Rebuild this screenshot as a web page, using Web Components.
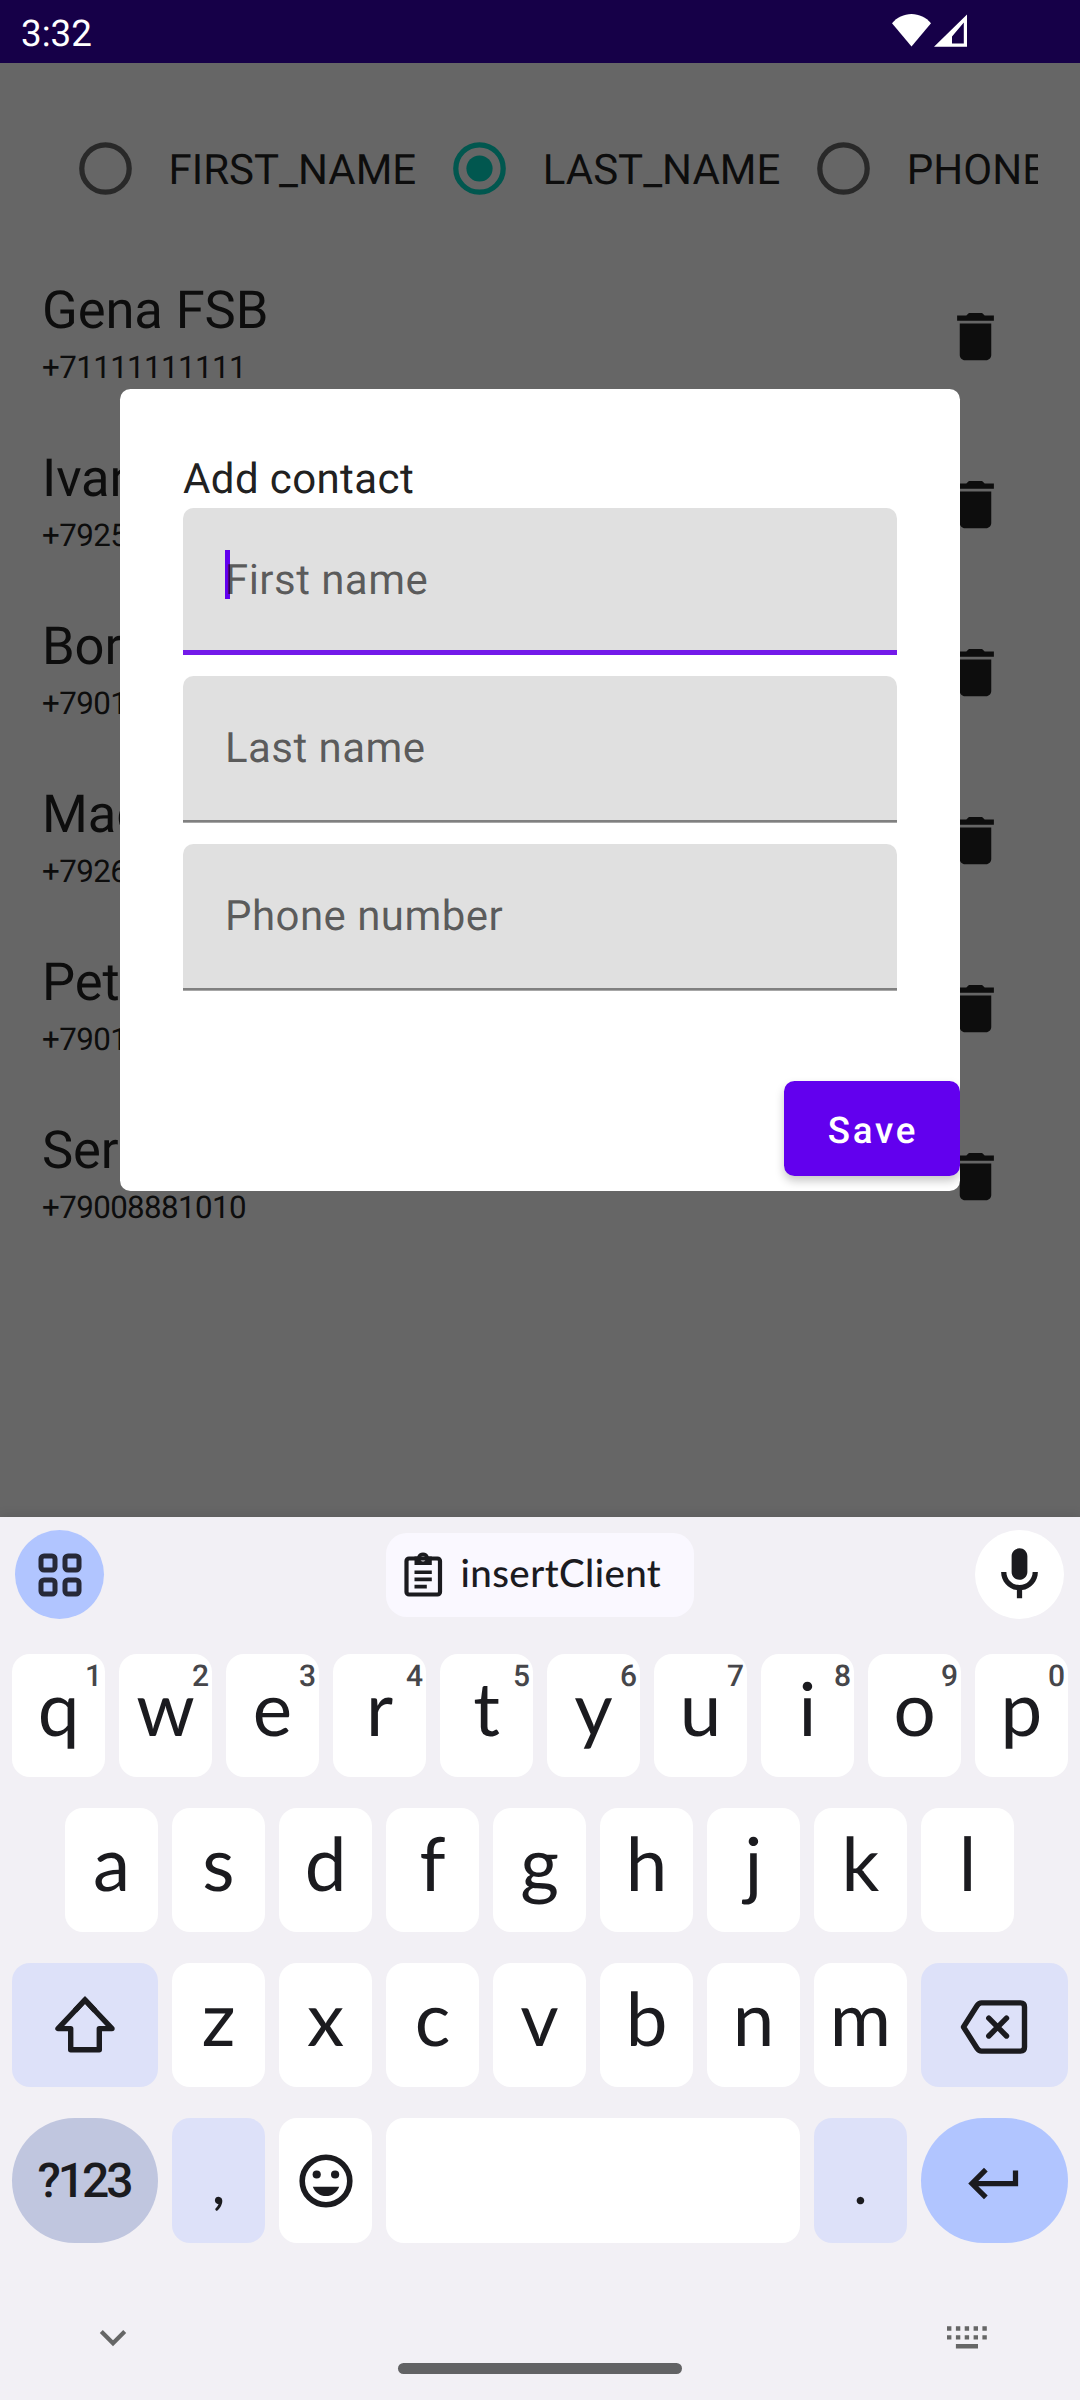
<!DOCTYPE html>
<html lang="en">
<head>
<meta charset="utf-8">
<title>Contacts</title>
<style>
html, body { margin: 0; padding: 0; background: #666; }
body { font-family: Roboto, sans-serif; text-rendering: geometricPrecision; }
</style>
</head>
<body>
<phone-screen>
  <status-bar slot="status" time="3:32"></status-bar>
  <sort-bar slot="content">
    <radio-option>FIRST_NAME</radio-option>
    <radio-option checked>LAST_NAME</radio-option>
    <radio-option>PHONE</radio-option>
  </sort-bar>
  <contact-row slot="content" phone="+71111111111">Gena FSB</contact-row>
  <contact-row slot="content" phone="+7925">Ivan</contact-row>
  <contact-row slot="content" phone="+7901">Bor</contact-row>
  <contact-row slot="content" phone="+7926">Mag</contact-row>
  <contact-row slot="content" phone="+7901">Pet</contact-row>
  <contact-row slot="content" phone="+79008881010">Ser</contact-row>
  <contact-dialog slot="dialog" heading="Add contact">
    <filled-field focused>First name</filled-field>
    <filled-field>Last name</filled-field>
    <filled-field>Phone number</filled-field>
    <raised-button slot="action">Save</raised-button>
  </contact-dialog>
  <soft-keyboard slot="keyboard" suggestion="insertClient"></soft-keyboard>
</phone-screen>

<script>
class Base extends HTMLElement {
  constructor() {
    super();
    this.attachShadow({ mode: 'open' });
  }
  connectedCallback() {
    this.shadowRoot.innerHTML = this.view();
  }
}

customElements.define('phone-screen', class extends Base {
  view() { return `
    <style>
      :host { display: flex; flex-direction: column; position: relative; width: 1080px; height: 2400px; background: #666; overflow: hidden; }
      main { display: flex; flex-direction: column; height: 1454px; overflow: hidden; flex: none; }
      ::slotted([slot=dialog]) { position: absolute; left: 120px; top: 389px; z-index: 1; }
    </style>
    <slot name="status"></slot>
    <main><slot name="content"></slot></main>
    <slot name="keyboard"></slot>
    <slot name="dialog"></slot>`; }
});

customElements.define('status-bar', class extends Base {
  view() { return `
    <style>
      :host { display: flex; flex: none; box-sizing: border-box; height: 63px; padding: 0 113px 0 21px; background: #160048; color: #fff; justify-content: space-between; align-items: flex-start; }
      span { font-size: 36.75px; line-height: 43px; padding-top: 11.5px; }
      div { display: flex; gap: 3px; padding-top: 14px; }
      svg { display: block; }
    </style>
    <span>${this.getAttribute('time')}</span>
    <div>
      <svg width="39" height="33" viewBox="0 0 39 33"><path fill="#fff" d="M19.5 32.5 0 9.2C4.8 3.500 12 0 19.500 0S34.200 3.500 39 9.200Z"/></svg>
      <svg width="33" height="33" viewBox="0 0 33 33"><path fill="#fff" fill-rule="evenodd" d="M33 .5V32.700H0ZM29.800 8.500 18 22.500V29.500H29.800Z"/></svg>
    </div>`; }
});

customElements.define('sort-bar', class extends Base {
  view() { return `
    <style>
      :host { display: flex; flex: none; box-sizing: border-box; height: 189.600px; padding: 42px 0 21px; margin: 0 42px; overflow: hidden; align-items: center; }
    </style><slot></slot>`; }
});

customElements.define('radio-option', class extends Base {
  view() {
    const on = this.hasAttribute('checked');
    const c = on ? '#01574f' : '#292929';
    return `
    <style>
      :host { display: flex; flex: none; align-items: center; font-size: 42px; line-height: 49px; color: #0d0d0d; white-space: nowrap; }
      svg { display: block; flex: none; padding: 0 36.500px 0 37px; }
      span { padding-top: 4px; }
    </style>
    <svg width="53" height="53" viewBox="0 0 53 53"><circle cx="26.500" cy="26.500" r="23.700" fill="none" stroke="${c}" stroke-width="5.250"/>${on ? `<circle cx="26.500" cy="26.500" r="13.100" fill="${c}"/>` : ''}</svg>
    <span><slot></slot></span>`;
  }
});

customElements.define('contact-row', class extends Base {
  view() { return `
    <style>
      :host { display: flex; flex: none; box-sizing: border-box; height: 168px; padding: 26.500px 72.800px 0 42px; justify-content: space-between; align-items: flex-start; color: #0d0d0d; white-space: nowrap; }
      .name { font-size: 52.500px; line-height: 62px; letter-spacing: -.1px; }
      .phone { font-size: 31.300px; line-height: 37px; margin-top: 8px; letter-spacing: -.6px; }
      svg { display: block; margin-top: 26px; }
    </style>
    <div><div class="name"><slot></slot></div><div class="phone">${this.getAttribute('phone')}</div></div>
    <svg width="63" height="63" viewBox="0 0 24 24"><path fill="#0d0d0d" d="M6 19c0 1.100.9 2 2 2h8c1.100 0 2-.9 2-2V7H6v12zM19 4h-3.500l-1-1h-5l-1 1H5v2h14V4z"/></svg>`; }
});

customElements.define('contact-dialog', class extends Base {
  view() { return `
    <style>
      :host { display: flex; flex-direction: column; box-sizing: border-box; width: 840px; height: 802px; padding-top: 66px; background: #fff; border-radius: 10.500px; overflow: hidden; }
      h1 { margin: 0; padding: 0 63px; font-size: 42px; line-height: 49px; height: 53px; font-weight: 400; letter-spacing: .4px; color: #212121; white-space: nowrap; }
      .fields { display: flex; flex-direction: column; gap: 21px; padding: 0 63px; }
      .actions { display: flex; justify-content: flex-end; padding-top: 90px; }
    </style>
    <h1>${this.getAttribute('heading')}</h1>
    <div class="fields"><slot></slot></div>
    <div class="actions"><slot name="action"></slot></div>`; }
});

customElements.define('filled-field', class extends Base {
  view() {
    const f = this.hasAttribute('focused');
    return `
    <style>
      :host { display: flex; flex: none; align-items: center; box-sizing: border-box; position: relative; height: 147px; padding: 0 42px 2px; background: linear-gradient(${f ? '#731ae9,#731ae9' : '#808080,#808080'}) left bottom / 100% ${f ? '5.250px' : '2.600px'} no-repeat, #e0e0e0; border-radius: 10.500px 10.500px 0 0; }
      span { position: relative; font-size: 42px; line-height: 49px; letter-spacing: .45px; color: rgba(0,0,0,.6); white-space: nowrap; }
      i { position: absolute; left: 42px; top: 42px; width: 5.250px; height: 49px; background: #6200ee; }
    </style>
    ${f ? '<i></i>' : ''}<span><slot></slot></span>`;
  }
});

customElements.define('raised-button', class extends Base {
  view() { return `
    <style>
      :host { display: flex; align-items: center; justify-content: center; box-sizing: border-box; width: 176px; height: 95px; padding: 4px 0 0 2px; border-radius: 10.500px; background: #6200ee; color: #fff; font-size: 36.750px; font-weight: 500; letter-spacing: 2.800px; box-shadow: 0 5px 10px rgba(0,0,0,.22); }
    </style><slot></slot>`; }
});

customElements.define('key-cap', class extends Base {
  view() {
    const hint = this.getAttribute('hint');
    return `
    <style>
      :host { display: flex; position: relative; flex: 1 1 0; min-width: 0; box-sizing: border-box; justify-content: center; align-items: center; background: #fff; border-radius: 18px; color: #1b1b1f; font: 400 74.500px/90px Lato, sans-serif; }
      :host([letter]) { padding-bottom: 17px; }
      :host([tone=soft]) { background: #dde1f9; }
      :host([tone=mode]) { background: #c0c6df; border-radius: 63px; }
      :host([tone=enter]) { background: #b1c5ff; border-radius: 63px; }
      :host([wide=left]) { flex: 0 0 146px; }
      :host([wide=right]) { flex: 0 0 147px; }
      :host([space]) { flex: 0 0 414px; }
      :host([punct]) { font-size: 50px; font-weight: 700; padding-top: 8px; }
      :host([label]) { font: 500 48px/56px Roboto, sans-serif; letter-spacing: -3px; padding-right: 2px; }
      small { position: absolute; right: 3px; top: 5px; font: 500 30px/36px Roboto, sans-serif; color: #46464a; }
    </style>
    ${hint ? `<small>${hint}</small>` : ''}<slot></slot>`;
  }
});

customElements.define('soft-keyboard', class extends Base {
  view() {
    const keys = s => [...s].map(k => `<key-cap letter>${k}</key-cap>`).join('');
    const top = [...'qwertyuiop'].map((k, i) => `<key-cap letter hint="${(i + 1) % 10}">${k}</key-cap>`).join('');
    return `
    <style>
      :host { display: flex; flex-direction: column; flex: none; box-sizing: border-box; height: 883px; background: #f2f0f5; padding-top: 13px; box-shadow: 0 0 12px rgba(0,0,0,.12); position: relative; }
      svg { display: block; flex: none; }
      .tools { display: flex; height: 89px; padding: 0 16px 0 15px; justify-content: space-between; align-items: center; margin-bottom: 35px; }
      .round { display: flex; width: 89px; height: 89px; border-radius: 50%; align-items: center; justify-content: center; background: #b1c5ff; }
      .mic { background: #fff; }
      .chip { display: flex; box-sizing: border-box; width: 308px; height: 84px; border-radius: 21px; background: #faf8ff; align-items: center; padding-left: 18px; gap: 18px; color: #1b1b1f; font: 500 38.500px/48px Lato, sans-serif; letter-spacing: .4px; white-space: nowrap; }
      .chip span { padding-bottom: 3px; }
      .row { display: flex; gap: 14px; padding: 0 12px; height: 124px; margin-bottom: 31px; }
      .r1 { height: 123px; }
      .r2 { padding: 0 66px 0 65px; }
      .r4 { height: 125px; margin-bottom: 83px; }
      .nav { display: flex; justify-content: space-between; align-items: flex-start; padding: 0 92px 0 99px; height: 23px; }
      .home { width: 284px; height: 11px; border-radius: 5.500px; background: #626264; margin: 14px auto 0; }
    </style>
    <div class="tools">
      <div class="round"><svg width="44" height="44" viewBox="0 0 44 44" fill="none" stroke="#272938" stroke-width="5"><rect x="3" y="3" width="14" height="14" rx="3"/><rect x="27" y="3" width="14" height="14" rx="3"/><rect x="3" y="27" width="14" height="14" rx="3"/><rect x="27" y="27" width="14" height="14" rx="3"/></svg></div>
      <div class="chip">
        <svg width="39" height="45" viewBox="0 0 39 45"><rect x="2.500" y="6.500" width="33.500" height="36" rx="2.500" fill="none" stroke="#1b1b1f" stroke-width="4.200"/><path fill="#1b1b1f" fill-rule="evenodd" d="M10.500 13V4.500H13.200A6.200 6.200 0 0 1 24.800 4.500H27.800V13ZM19 4.300a2.600 2.600 0 1 0 .01 0ZM10.500 18.400H27.800V22H10.500ZM10.500 25.500H27.800V29.200H10.500ZM10.500 32.800H22.800V36.500H10.500Z"/></svg>
        <span>${this.getAttribute('suggestion')}</span>
      </div>
      <div class="round mic"><svg width="63" height="63" viewBox="0 0 24 24"><path fill="#1b1b1f" d="M12 14c1.660 0 3-1.340 3-3V5c0-1.660-1.340-3-3-3S9 3.340 9 5v6c0 1.660 1.340 3 3 3zM17 11c0 2.760-2.240 5-5 5s-5-2.240-5-5H5c0 3.530 2.610 6.430 6 6.920V21h2v-3.080c3.390-.49 6-3.390 6-6.920z"/></svg></div>
    </div>
    <div class="row r1">${top}</div>
    <div class="row r2">${keys('asdfghjkl')}</div>
    <div class="row">
      <key-cap tone="soft" wide="left"><svg width="60" height="58" viewBox="0 0 60 58" fill="none" stroke="#1b1b1f" stroke-width="5.400"><path stroke-linejoin="round" d="M30 4 3 32.600H15.700V53.800H44.300V32.600H57Z"/><path d="M20 14.600 30 4 40 14.600"/></svg></key-cap>
      ${keys('zxcvbnm')}
      <key-cap tone="soft" wide="right"><svg width="68" height="54" viewBox="0 0 68 54" style="padding:4px 2px 0 0" fill="none" stroke="#1b1b1f" stroke-width="5.400" stroke-linejoin="round"><path d="M3.500 27 17 5.800Q18.900 2.900 21.500 2.900H60.500Q64.500 2.900 64.500 6.900V47.100Q64.500 51.100 60.500 51.100H21.500Q18.900 51.100 17 48.200Z"/><path stroke-linecap="round" d="M28.800 18.200 46.500 36M46.500 18.200 28.800 36"/></svg></key-cap>
    </div>
    <div class="row r4">
      <key-cap tone="mode" wide="left" label>?123</key-cap>
      <key-cap tone="soft" punct>,</key-cap>
      <key-cap><svg width="54" height="54" viewBox="0 0 54 54"><circle cx="27" cy="27" r="23.800" fill="none" stroke="#1b1b1f" stroke-width="5.600"/><g fill="#1b1b1f"><circle cx="17.700" cy="20.500" r="4.100"/><circle cx="36.100" cy="20.500" r="4.100"/><path d="M13.800 32.700H40.200C38 38.500 33 42 27 42S16 38.500 13.800 32.700Z"/></g></svg></key-cap>
      <key-cap space></key-cap>
      <key-cap tone="soft" punct>.</key-cap>
      <key-cap tone="enter" wide="right"><svg width="63" height="63" viewBox="0 0 24 24" style="padding-top:5px"><path fill="#1b1b1f" d="M19 7v4H5.830l3.580-3.590L8 6l-6 6 6 6 1.410-1.410L5.830 13H21V7z"/></svg></key-cap>
    </div>
    <div class="nav">
      <svg width="28" height="20" viewBox="0 0 28 20" style="padding-top:3px"><path d="M2.300 2.500 14 14.200 25.700 2.500" fill="none" stroke="#666" stroke-width="4.200"/></svg>
      <svg width="41" height="23" viewBox="0 0 41 23" fill="#666"><path d="M0 .3h4.400v4.400H0zM8.900.3h4.400v4.400H8.900zM17.700.3h4.400v4.400h-4.400zM26.600.3H31v4.400h-4.400zM35.400.3h4.400v4.400h-4.400zM0 9.200h4.400v4.400H0zM8.900 9.200h4.400v4.400H8.900zM17.700 9.200h4.400v4.400h-4.400zM26.600 9.200H31v4.400h-4.400zM35.400 9.200h4.400v4.400h-4.400zM8.900 18H31v4.400H8.900z"/></svg>
    </div>
    <div class="home"></div>`;
  }
});
</script>
</body>
</html>
